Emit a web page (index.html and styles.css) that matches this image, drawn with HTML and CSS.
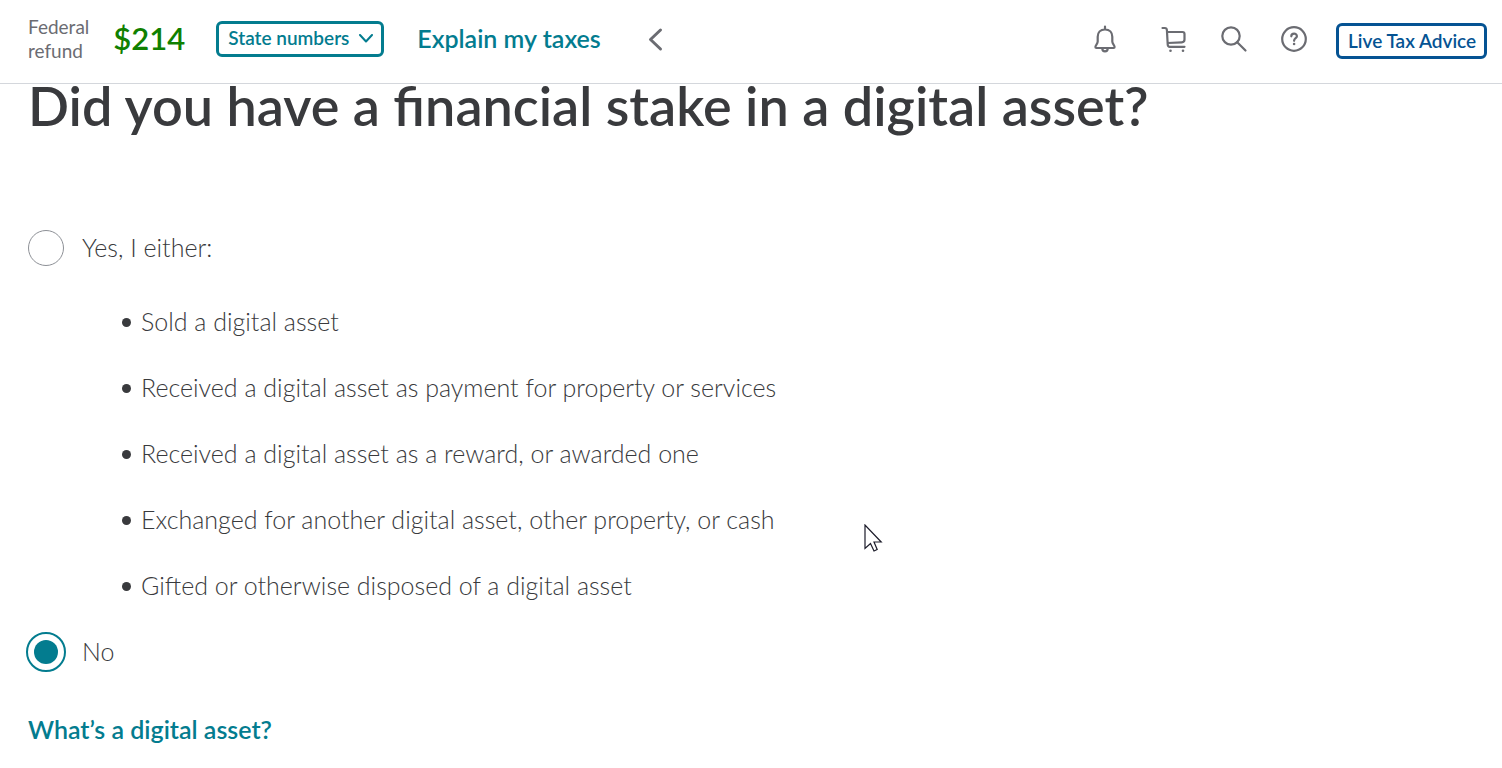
FILE: index.html
```html
<!DOCTYPE html>
<html lang="en">
<head>
<meta charset="utf-8">
<meta name="viewport" content="width=device-width, initial-scale=1">
<title>Digital assets</title>
<link rel="stylesheet" href="styles.css">
</head>
<body>
<header class="topbar">
  <div class="refund">
    <span class="refund-label">Federal<br>refund</span>
    <strong class="refund-amount">$214</strong>
  </div>
  <div class="state-picker">
    <select class="state-select" aria-label="State numbers">
      <option>State numbers</option>
    </select>
    <svg class="state-chevron" width="16" height="10" viewBox="0 0 16 10" fill="none" stroke="currentColor" stroke-width="2" stroke-linecap="round" stroke-linejoin="round" aria-hidden="true"><path d="M2 1l6 6.500 6-6.500"/></svg>
  </div>
  <a class="explain" href="#explain">Explain my taxes</a>
  <button class="icon-button" type="button" aria-label="Collapse">
    <svg width="28" height="28" viewBox="0 0 28 28" fill="none" stroke="currentColor" stroke-width="3" stroke-linecap="round" stroke-linejoin="round"><path d="M19.500 5L9.500 14.500l10 9.500"/></svg>
  </button>
  <nav class="tools" aria-label="Tools">
    <button class="icon-button" type="button" aria-label="Notifications">
      <svg width="28" height="28" viewBox="0 0 28 28" fill="none" stroke="currentColor" stroke-width="2.200" stroke-linecap="round" stroke-linejoin="round"><path d="M13 1.500v3M13 4.500c-4.600 0-7.300 3.200-7.300 7.300v4.700c0 2.400-2.300 3.600-2.300 5.500 0 .7.400 1 1 1h17.200c.6 0 1-.3 1-1 0-1.900-2.300-3.100-2.300-5.500v-4.700c0-4.100-2.700-7.300-7.300-7.300zM10.300 23.500c0 3.900 5.400 3.900 5.400 0"/></svg>
    </button>
    <button class="icon-button icon-cart" type="button" aria-label="Cart">
      <svg width="28" height="28" viewBox="0 0 28 28" fill="none" stroke="currentColor" stroke-width="2.200" stroke-linecap="round" stroke-linejoin="round"><path d="M2.500 3h2.300c1.400 0 2 .8 2.100 2l.8 14.500c.1 1.500.8 2.300 2.100 2.300h14.700M7.100 7h15.400c1.300 0 2 .7 2 1.900v5.600c0 1.700-.8 2.700-2.700 2.800L7.700 18"/><circle cx="10.500" cy="25.700" r="1.300" fill="currentColor" stroke="none"/><circle cx="23" cy="25.700" r="1.300" fill="currentColor" stroke="none"/></svg>
    </button>
    <button class="icon-button" type="button" aria-label="Search">
      <svg width="28" height="28" viewBox="0 0 28 28" fill="none" stroke="currentColor" stroke-width="2.200" stroke-linecap="round"><circle cx="11" cy="11" r="8.700"/><path d="M17.200 17.200l8.300 8.300"/></svg>
    </button>
    <button class="icon-button" type="button" aria-label="Help">
      <svg width="28" height="28" viewBox="0 0 28 28" fill="none" stroke="currentColor" stroke-width="2.200" stroke-linecap="round" stroke-linejoin="round"><circle cx="14" cy="14" r="11.800"/><path d="M11.300 11.300c0-3.600 5.600-3.500 5.600-.1 0 2.100-2.800 2-2.800 4.600"/><circle cx="14.100" cy="19" r="1.300" fill="currentColor" stroke="none"/></svg>
    </button>
    <button class="live-button" type="button">Live Tax Advice</button>
  </nav>
</header>
<main class="page">
  <form>
    <h1 class="title" id="question">Did you have a financial stake in a digital asset?</h1>
    <div class="choices" role="radiogroup" aria-labelledby="question">
      <div class="choice">
        <input class="radio" type="radio" name="stake" id="yes" value="yes">
        <label for="yes">Yes, I either:</label>
      </div>
      <ul class="reasons">
        <li>Sold a digital asset</li>
        <li>Received a digital asset as payment for property or services</li>
        <li>Received a digital asset as a reward, or awarded one</li>
        <li>Exchanged for another digital asset, other property, or cash</li>
        <li>Gifted or otherwise disposed of a digital asset</li>
      </ul>
      <div class="choice">
        <input class="radio" type="radio" name="stake" id="no" value="no" checked>
        <label for="no">No</label>
      </div>
    </div>
    <a class="help-link" href="#digital-asset">What’s a digital asset?</a>
  </form>
</main>
<svg class="pointer" width="20" height="30" viewBox="0 0 20 30" fill="#fff" stroke="#1c1c2a" stroke-width="1.200" aria-hidden="true"><path d="M1 1v23.500l5.500-5L10 27l3.200-1.500-3.200-7.500h7.200z"/></svg>
</body>
</html>
```
FILE: styles.css
```css
* {
  box-sizing: border-box;
}

body {
  margin: 0;
  background: #fff;
  color: #393a3d;
  font-family: Lato, "Open Sans", sans-serif;
  font-size: 25px;
  font-weight: 300;
  line-height: 34px;
}

.topbar {
  display: flex;
  align-items: center;
  min-height: 84px;
  padding: 0 15px 6px 28px;
  border-bottom: 1px solid #d4d7dc;
  color: #6b6c72;
}

.refund {
  display: flex;
  align-items: center;
  gap: 24px;
  margin-right: 31px;
}

.refund-label {
  font-size: 19px;
  font-weight: 400;
  line-height: 24px;
}

.refund-amount {
  padding-bottom: 2px;
  color: #108000;
  font-size: 31px;
  font-weight: 600;
}

.state-picker {
  display: grid;
  align-items: center;
  margin-right: 33px;
  color: #037c8f;
}

.state-select,
.live-button {
  height: 36px;
  padding: 0 9px;
  border: 3px solid;
  border-radius: 6px;
  background: none;
  font-family: inherit;
  font-size: 19px;
  font-weight: 600;
}

.state-select {
  grid-area: 1 / 1;
  width: 168px;
  padding-bottom: 2px;
  appearance: none;
  color: inherit;
}

.state-chevron {
  grid-area: 1 / 1;
  justify-self: end;
  margin-right: 10px;
  pointer-events: none;
}

.explain,
.help-link {
  color: #037c8f;
  font-size: 25px;
  font-weight: 600;
  text-decoration: none;
}

.explain {
  margin-right: 40px;
  padding-bottom: 2px;
}

.icon-button {
  display: flex;
  padding: 0;
  border: 0;
  background: none;
  color: #6b6c72;
}

.tools {
  display: flex;
  align-items: center;
  gap: 32px;
  margin-left: auto;
}

.icon-cart {
  margin-left: 8px;
}

.live-button {
  width: 151px;
  margin: 4px 0 0 -4px;
  color: #055393;
  white-space: nowrap;
}

.page {
  padding: 0 28px 20px;
}

.title {
  margin: 0 0 102px;
  font-size: 54px;
  font-weight: 600;
  line-height: 44px;
}

.choice {
  display: flex;
  align-items: center;
  gap: 18px;
}

.choice label {
  padding-bottom: 2px;
}

.radio {
  display: grid;
  place-items: center;
  width: 36px;
  height: 36px;
  margin: 0;
  border: 1px solid #8d9096;
  border-radius: 50%;
  appearance: none;
}

.radio:checked {
  border-color: transparent;
  outline: 2px solid #037c8f;
}

.radio:checked::before {
  width: 24px;
  height: 24px;
  border-radius: 50%;
  background: #037c8f;
  content: "";
}

.reasons {
  display: grid;
  gap: 32px;
  margin: 38px 0 32px;
  padding: 0 0 0 94px;
  list-style: none;
}

.reasons li {
  display: flex;
  align-items: center;
  gap: 10px;
}

.reasons li::before {
  flex: none;
  width: 9px;
  height: 9px;
  margin-top: 2px;
  border-radius: 50%;
  background: #393a3d;
  content: "";
}

.help-link {
  display: inline-block;
  margin-top: 42px;
}

.pointer {
  position: absolute;
  top: 524px;
  left: 864px;
  pointer-events: none;
}
```
